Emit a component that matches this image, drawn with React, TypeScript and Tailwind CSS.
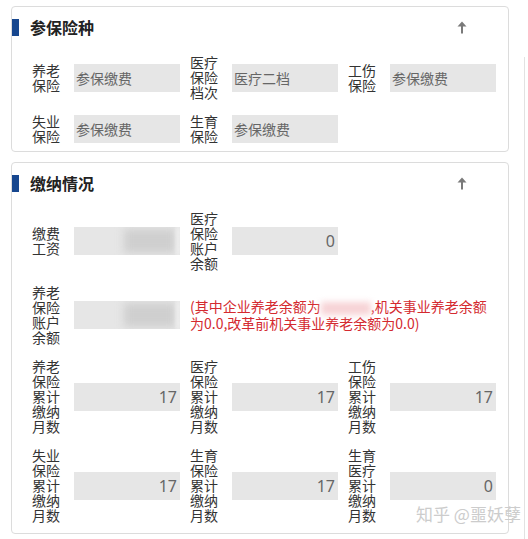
import React from "react";

const FONT = { fontFamily: '"Noto Sans CJK SC", "Noto Sans", sans-serif' };

function Arrow() {
  return (
    <svg width="10" height="13" viewBox="0 0 10 13">
      <polygon points="5,0.5 9.5,5.5 0.5,5.5" fill="#7a7a7a" />
      <rect x="4" y="5" width="2" height="7.5" fill="#7a7a7a" />
    </svg>
  );
}

function Title({ text }: { text: string }) {
  return (
    <div className="flex h-[40px] items-center justify-between pr-[41px]">
      <div className="flex items-center">
        <div className="h-[17px] w-[7px] bg-[#17478f]" />
        <div className="ml-[11px] text-[16px] font-bold leading-[20px] text-[#222]">{text}</div>
      </div>
      <Arrow />
    </div>
  );
}

type FieldProps = {
  label: string;
  value?: string;
  num?: boolean;
  blurred?: boolean;
};

function Field({ label, value, num, blurred }: FieldProps) {
  return (
    <div className="flex w-[158px] shrink-0 items-center">
      <div className="mr-[14px] w-[28px] break-all text-[14px] leading-[15px] text-[#333]">{label}</div>
      <div
        className={
          "relative flex h-[28px] w-[106px] items-center overflow-hidden bg-[#e6e6e6] " +
          (num ? "justify-end pr-[3px]" : "pl-[2px]")
        }
      >
        {blurred ? (
          <>
            <div className="absolute inset-y-[2px] left-[50px] w-[52px] bg-[#cfcfcf] blur-[4px]" />
            <div className="absolute inset-y-0 right-0 w-[4px] bg-[#f2f2f2] blur-[2px]" />
          </>
        ) : num ? (
          <span className="text-[16px] leading-[20px] text-[#666]" style={{ fontFamily: '"Noto Sans", sans-serif' }}>
            {value}
          </span>
        ) : (
          <span className="text-[14px] leading-[18px] text-[#666]">{value}</span>
        )}
      </div>
    </div>
  );
}

function Row({ children }: { children: React.ReactNode }) {
  return <div className="flex items-center py-[7px] pl-[20px]">{children}</div>;
}

export default function App() {
  return (
    <div className="relative flex h-[539px] w-[528px] overflow-hidden bg-white" style={FONT}>
      <div className="ml-[11px] w-[498px] shrink-0 pt-[6px]">
        <div className="rounded-[4px] border border-[#dcdcdc]">
          <Title text="参保险种" />
          <div className="pt-[1px]">
            <Row>
              <Field label="养老保险" value="参保缴费" />
              <Field label="医疗保险档次" value="医疗二档" />
              <Field label="工伤保险" value="参保缴费" />
            </Row>
            <Row>
              <Field label="失业保险" value="参保缴费" />
              <Field label="生育保险" value="参保缴费" />
            </Row>
          </div>
        </div>

        <div className="mt-[10px] rounded-[4px] border border-[#dcdcdc] pb-[3px]">
          <Title text="缴纳情况" />
          <div className="pt-[1px]">
            <Row>
              <Field label="缴费工资" blurred />
              <Field label="医疗保险账户余额" value="0" num />
            </Row>
            <Row>
              <Field label="养老保险账户余额" blurred />
              <div className="w-[316px] text-[14px] leading-[17px] text-[#d42a2f]">
                <div className="whitespace-nowrap">
                  (其中企业养老余额为
                  <span className="relative inline-block h-[13px] w-[50px] align-middle">
                    <span className="absolute inset-0 bg-[#f7d3d6] blur-[3px]" />
                  </span>
                  ,机关事业养老余额
                </div>
                <div className="whitespace-nowrap">为0.0,改革前机关事业养老余额为0.0)</div>
              </div>
            </Row>
            <Row>
              <Field label="养老保险累计缴纳月数" value="17" num />
              <Field label="医疗保险累计缴纳月数" value="17" num />
              <Field label="工伤保险累计缴纳月数" value="17" num />
            </Row>
            <Row>
              <Field label="失业保险累计缴纳月数" value="17" num />
              <Field label="生育保险累计缴纳月数" value="17" num />
              <Field label="生育医疗累计缴纳月数" value="0" num />
            </Row>
          </div>
        </div>
      </div>
      <div className="ml-[15px] mt-[57px] border-l border-[#e2e2e2]" />
      <div className="absolute left-[416px] top-[503px] text-[17px] leading-[22px] text-[#cccccc]">
        知乎 @噩妖孽
      </div>
    </div>
  );
}
